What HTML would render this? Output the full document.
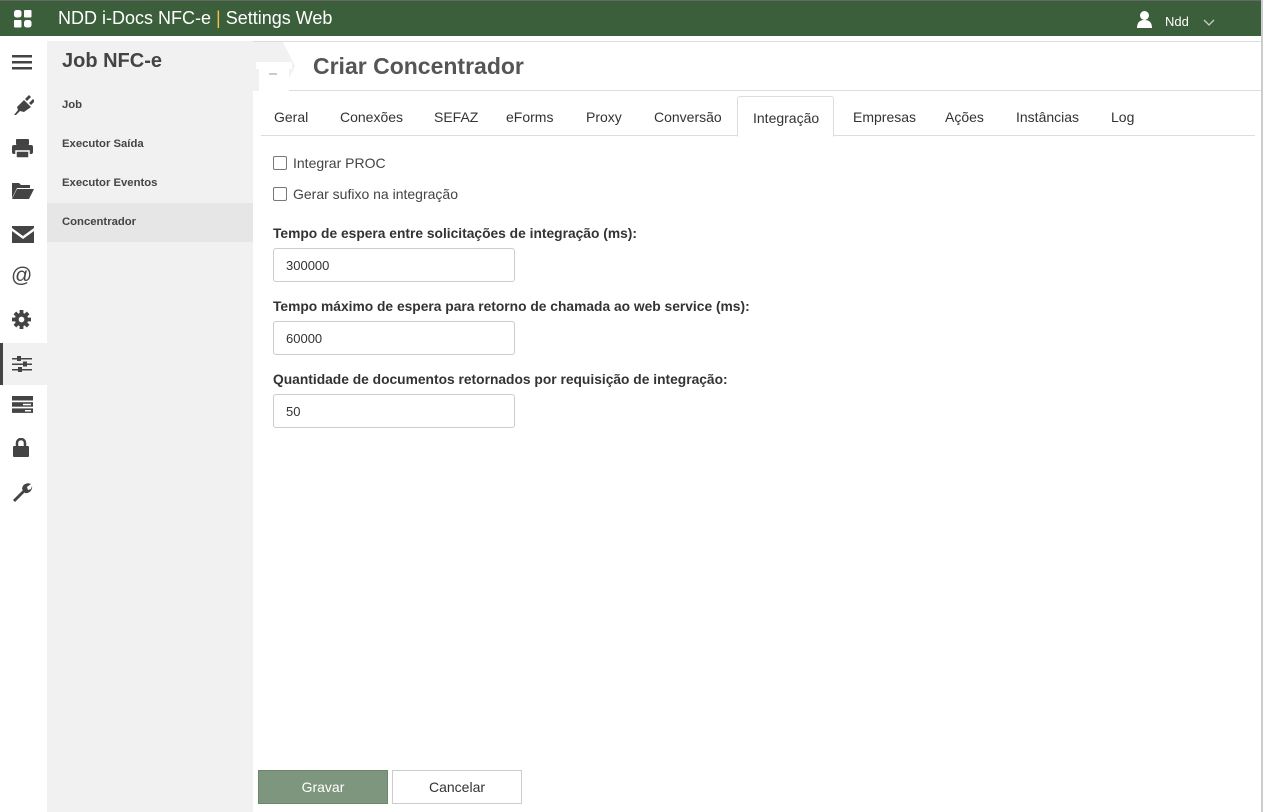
<!DOCTYPE html>
<html><head><meta charset="utf-8"><style>
*{box-sizing:border-box;margin:0;padding:0}
body{width:1263px;height:812px;overflow:hidden;background:#fff;font-family:"Segoe UI","Liberation Sans",sans-serif;color:#333;position:relative}
.hdr{position:absolute;left:0;top:0;width:1263px;height:36px;background:#3b5e3b;border-top:1px solid #666}
.hdr .t{position:absolute;left:58px;top:7px;color:#fff;font-size:18px}
.hdr .t b{color:#f0c24c;font-weight:normal}
.ic{position:absolute;left:0;top:36px;width:47px;height:776px;background:#fff}
.ic svg{position:absolute;left:12px}
.side{position:absolute;left:47px;top:41px;width:206px;height:771px;background:#f1f1f1}
.side h1{font-size:20px;font-weight:600;color:#444;position:absolute;left:15px;top:9px}
.side a{position:absolute;left:0;width:206px;height:39px;padding:13px 15px;font-size:11.3px;color:#444;font-weight:600}
.main{position:absolute;left:253px;top:41px;right:2px;bottom:0}
.title{position:absolute;left:0;top:0;right:0;height:50px;border-bottom:1px solid #ddd;border-top:1px solid #ddd}
.title h2{position:absolute;left:60px;top:11px;font-size:23px;font-weight:600;color:#555}
.tabs{position:absolute;left:8px;top:55px;right:6px;height:40px;border-bottom:1px solid #ddd}
.tab{position:absolute;top:0;height:40px;padding-top:13px;font-size:14px;color:#333}
.tab.on{border:1px solid #ddd;border-bottom:1px solid #fff;border-radius:3px 3px 0 0;background:#fff;height:41px}
.cb{position:absolute;left:20px;font-size:14px;color:#444}
.cb i{display:inline-block;width:14px;height:14px;border:1px solid #777;border-radius:2px;vertical-align:-2px;margin-right:6px}
.lbl{position:absolute;left:20px;font-size:13.8px;font-weight:bold;color:#333}
.inp{position:absolute;left:20px;width:242px;height:34px;border:1px solid #ccc;border-radius:3px;padding:9px 12px;font-size:13px}
.btn{position:absolute;top:729px;height:34px;width:130px;text-align:center;font-size:14px;padding-top:8px}
</style></head><body>
<div class="hdr">
<svg style="position:absolute;left:14px;top:9px" width="18" height="18" viewBox="0 0 18 18" fill="#fff"><rect x="0" y="0" width="7.5" height="7.5" rx="2.5"/><rect x="10" y="0" width="7.5" height="7.5" rx="1"/><rect x="0" y="10" width="7.5" height="7.5" rx="1"/><rect x="10" y="10" width="7.5" height="7.5" rx="2.5"/></svg>
<div class="t">NDD i-Docs NFC-e <b>|</b> Settings Web</div>
<svg style="position:absolute;left:1137px;top:10px" width="15" height="17" viewBox="0 0 15 17" fill="#fff"><circle cx="7.5" cy="4.5" r="4.5"/><path d="M0 17 Q0 9 7.5 9 Q15 9 15 17Z"/></svg>
<div style="position:absolute;left:1165px;top:13px;color:#fff;font-size:13px">Ndd</div>
<svg style="position:absolute;left:1203px;top:18px" width="12" height="7" viewBox="0 0 12 7"><path d="M1 1 L6 6 L11 1" stroke="#ccc" fill="none" stroke-width="1.3"/></svg>
</div>
<div class="ic">
<svg style="top:18px" width="20" height="16"><rect y="1" width="20" height="2.5" fill="#444"/><rect y="7" width="20" height="2.5" fill="#444"/><rect y="13" width="20" height="2.5" fill="#444"/></svg>
<svg style="top:58px" width="22" height="22" viewBox="0 0 22 22" fill="#444"><path d="M2 21 L6 16 L5 13 L12 6 L19 13 L12 18 L8 17 L4 21Z M13 5 L17 1 L19 3 L15 7Z M17 9 L21 5 L23 7 L19 11Z"/></svg>
<svg style="top:103px" width="21" height="19" viewBox="0 0 21 19" fill="#444"><rect x="4" y="0" width="13" height="6" rx="1"/><rect x="0" y="6" width="21" height="9" rx="2"/><rect x="4" y="12" width="13" height="7" fill="#444" stroke="#fff" stroke-width="1.5"/></svg>
<svg style="top:146px" width="22" height="17" viewBox="0 0 22 17" fill="#444"><path d="M0 1 L7 1 L9 3 L18 3 L18 6 L5 6 L0 16Z M5 7 L22 7 L17 17 L0 17Z"/></svg>
<svg style="top:190px" width="22" height="17" viewBox="0 0 22 17" fill="#444"><path d="M0 0 L22 0 L22 2 L11 10 L0 2Z M0 5 L11 13 L22 5 L22 17 L0 17Z"/></svg>
<div style="position:absolute;left:11px;top:228px;font-size:21px;color:#444">@</div>
<svg style="top:274px" width="19" height="19" viewBox="0 0 20 20" fill="#444"><circle cx="10" cy="10" r="7"/><g stroke="#444" stroke-width="4"><path d="M10 0V20M0 10H20M3 3L17 17M17 3L3 17"/></g><circle cx="10" cy="10" r="3" fill="#fff"/></svg>
<div style="position:absolute;left:0;top:307px;width:47px;height:42px;background:#f1f1f1;border-left:3px solid #444"></div>
<svg style="top:320px" width="20" height="16" viewBox="0 0 20 16" fill="#444"><rect y="2" width="20" height="1.5"/><rect y="7.5" width="20" height="1.5"/><rect y="13" width="20" height="1.5"/><rect x="5" y="0" width="4" height="5"/><rect x="11" y="5.5" width="4" height="5"/><rect x="6" y="11" width="4" height="5"/></svg>
<svg style="top:360px" width="21" height="17" viewBox="0 0 21 17" fill="#444"><rect width="21" height="4.5"/><rect y="6.2" width="21" height="4.5"/><rect y="12.4" width="21" height="4.5"/><rect x="11" y="7.8" width="8" height="1.5" fill="#fff"/><rect x="13" y="14" width="6" height="1.5" fill="#fff"/></svg>
<svg style="top:402px;left:13px" width="16" height="19" viewBox="0 0 16 19"><path d="M4 9 V5 A4 4 0 0 1 12 5 V9" stroke="#444" stroke-width="2.5" fill="none"/><rect y="8" width="16" height="11" rx="1" fill="#444"/></svg>
<svg style="top:446px" width="21" height="21" viewBox="0 0 21 21" fill="#444"><path d="M1 18 L11 8 L13 10 L3 20Z"/><path d="M10 7 A6 6 0 0 1 19 2 L15 5 L16 8 L19 7 L20 4 A6 6 0 0 1 13 11Z"/></svg>
</div>
<div class="side">
<h1>Job NFC-e</h1>
<a style="top:45px">Job</a>
<a style="top:84px">Executor Saída</a>
<a style="top:123px">Executor Eventos</a>
<a style="top:162px;background:#e6e6e6">Concentrador</a>
</div>
<div class="main">
<div class="title">
<svg style="position:absolute;left:0;top:0" width="48" height="49" viewBox="0 0 48 49"><path d="M0 0 L30 0 L42 24 L30 49 L0 49Z" fill="#f1f1f1"/><rect x="3" y="20" width="36" height="7" fill="#fff"/><rect x="6" y="27" width="30" height="22" fill="#fff"/><rect x="16" y="31" width="8" height="2" fill="#ccc"/></svg>
<h2>Criar Concentrador</h2>
</div>
<div class="tabs">
<div class="tab" style="left:13px">Geral</div>
<div class="tab" style="left:79px">Conexões</div>
<div class="tab" style="left:173px">SEFAZ</div>
<div class="tab" style="left:245px">eForms</div>
<div class="tab" style="left:325px">Proxy</div>
<div class="tab" style="left:393px">Conversão</div>
<div class="tab on" style="left:476px;width:97px;padding-left:15px">Integração</div>
<div class="tab" style="left:592px">Empresas</div>
<div class="tab" style="left:684px">Ações</div>
<div class="tab" style="left:755px">Instâncias</div>
<div class="tab" style="left:850px">Log</div>
</div>
<div class="cb" style="top:114px"><i></i>Integrar PROC</div>
<div class="cb" style="top:145px"><i></i>Gerar sufixo na integração</div>
<div class="lbl" style="top:185px">Tempo de espera entre solicitações de integração (ms):</div>
<div class="inp" style="top:207px">300000</div>
<div class="lbl" style="top:258px">Tempo máximo de espera para retorno de chamada ao web service (ms):</div>
<div class="inp" style="top:280px">60000</div>
<div class="lbl" style="top:331px">Quantidade de documentos retornados por requisição de integração:</div>
<div class="inp" style="top:353px">50</div>
<div class="btn" style="left:5px;background:#7d967d;color:#fff;border:1px solid #6d866d">Gravar</div>
<div class="btn" style="left:139px;border:1px solid #ccc;color:#333">Cancelar</div>
</div>
<div style="position:absolute;right:0;top:0;width:2px;height:812px;background:#ccc"></div>
</body></html>
